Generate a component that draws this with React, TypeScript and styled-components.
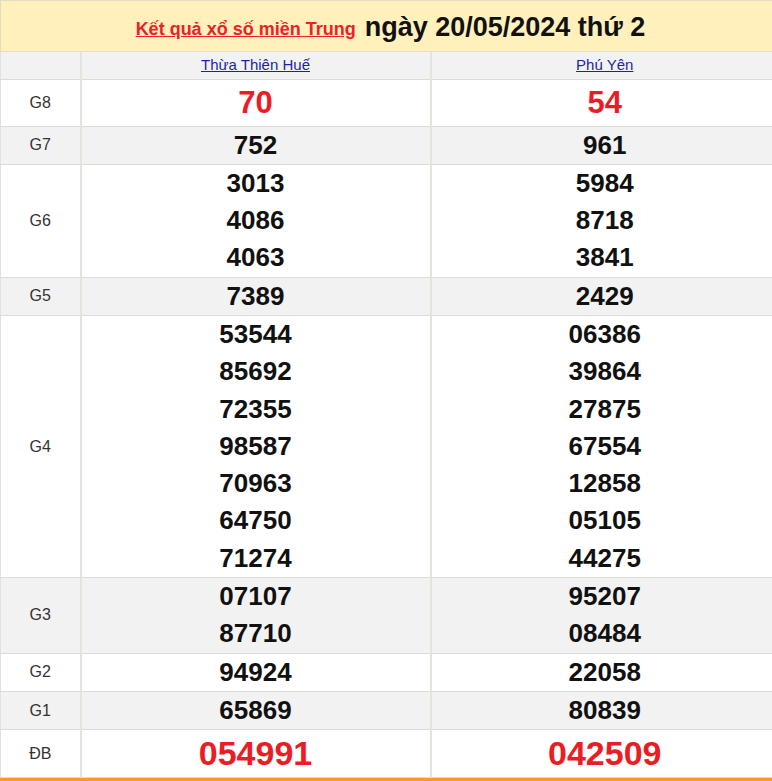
import React from "react";
import styled, { createGlobalStyle } from "styled-components";

const GlobalStyle = createGlobalStyle`
    html, body {
        margin: 0;
        padding: 0;
        background: #fff;
        overflow: hidden;
    }
    body {
        font-family: "Liberation Sans", Arial, sans-serif;
    }
`;

interface IPrizeRow {
    label: string;
    left: string[];
    right: string[];
    big?: boolean;
    special?: boolean;
}

const rows: IPrizeRow[] = [
    { label: "G8", left: ["70"], right: ["54"], big: true },
    { label: "G7", left: ["752"], right: ["961"] },
    { label: "G6", left: ["3013", "4086", "4063"], right: ["5984", "8718", "3841"] },
    { label: "G5", left: ["7389"], right: ["2429"] },
    {
        label: "G4",
        left: ["53544", "85692", "72355", "98587", "70963", "64750", "71274"],
        right: ["06386", "39864", "27875", "67554", "12858", "05105", "44275"],
    },
    { label: "G3", left: ["07107", "87710"], right: ["95207", "08484"] },
    { label: "G2", left: ["94924"], right: ["22058"] },
    { label: "G1", left: ["65869"], right: ["80839"] },
    { label: "ĐB", left: ["054991"], right: ["042509"], special: true },
];

const Page = styled.div`
    width: 780px;
    border-bottom: 5px solid #f39a2e;
`;

const Header = styled.div`
    height: 52px;
    box-sizing: border-box;
    border-top: 1px solid #e2dcc4;
    border-left: 1px solid #e2dcc4;
    border-bottom: 1px solid #eadfc6;
    background: #fff0bc;
    display: flex;
    align-items: center;
    justify-content: center;
    gap: 9px;
    padding-top: 2px;
`;

const TitleLink = styled.a`
    color: #ec2127;
    font-size: 18px;
    font-weight: 700;
    text-decoration: underline;
    margin-top: 4px;
`;

const DateText = styled.span`
    color: #111;
    font-size: 27px;
    font-weight: 700;
`;

const Table = styled.table`
    width: 780px;
    border-collapse: collapse;
    table-layout: fixed;
    border-left: 1px solid #e4e0da;
`;

const HeadRow = styled.tr`
    background: #f2f2f2;
    height: 27px;
`;

const Row = styled.tr<{ $alt: boolean }>`
    background: ${(p) => (p.$alt ? "#f2f2f2" : "#fff")};
`;

const Cell = styled.td`
    padding: 0;
    text-align: center;
    vertical-align: middle;
    border-right: 2px solid #e6e2dc;
    border-bottom: 1px solid #dedad4;
`;

const LabelCell = styled(Cell)`
    width: 78px;
    color: #333;
    font-size: 16px;
`;

const ProvinceLink = styled.a`
    color: #1f1fa8;
    font-size: 15px;
    text-decoration: underline;
`;

const Number = styled.div<{ $big?: boolean; $special?: boolean }>`
    font-weight: 700;
    color: ${(p) => (p.$big || p.$special ? "#ed1c24" : "#111")};
    font-size: ${(p) => (p.$special ? "34px" : p.$big ? "31px" : "26px")};
    line-height: ${(p) => (p.$special ? "47px" : p.$big ? "46px" : "37.3px")};
`;

const NumberCell = ({ nums, big, special }: { nums: string[]; big?: boolean; special?: boolean }) => (
    <Cell>
        {nums.map((n, i) => (
            <Number key={i} $big={big} $special={special}>
                {n}
            </Number>
        ))}
    </Cell>
);

export default function App() {
    return (
        <Page>
            <GlobalStyle />
            <Header>
                <TitleLink href="#">Kết quả xổ số miền Trung</TitleLink>
                <DateText>ngày 20/05/2024 thứ 2</DateText>
            </Header>
            <Table>
                <colgroup>
                    <col style={{ width: 80 }} />
                    <col style={{ width: 350 }} />
                    <col />
                </colgroup>
                <tbody>
                    <HeadRow>
                        <LabelCell />
                        <Cell>
                            <ProvinceLink href="#">Thừa Thiên Huế</ProvinceLink>
                        </Cell>
                        <Cell>
                            <ProvinceLink href="#">Phú Yên</ProvinceLink>
                        </Cell>
                    </HeadRow>
                    {rows.map((r, i) => (
                        <Row key={r.label} $alt={i % 2 === 1}>
                            <LabelCell>{r.label}</LabelCell>
                            <NumberCell nums={r.left} big={r.big} special={r.special} />
                            <NumberCell nums={r.right} big={r.big} special={r.special} />
                        </Row>
                    ))}
                </tbody>
            </Table>
        </Page>
    );
}
